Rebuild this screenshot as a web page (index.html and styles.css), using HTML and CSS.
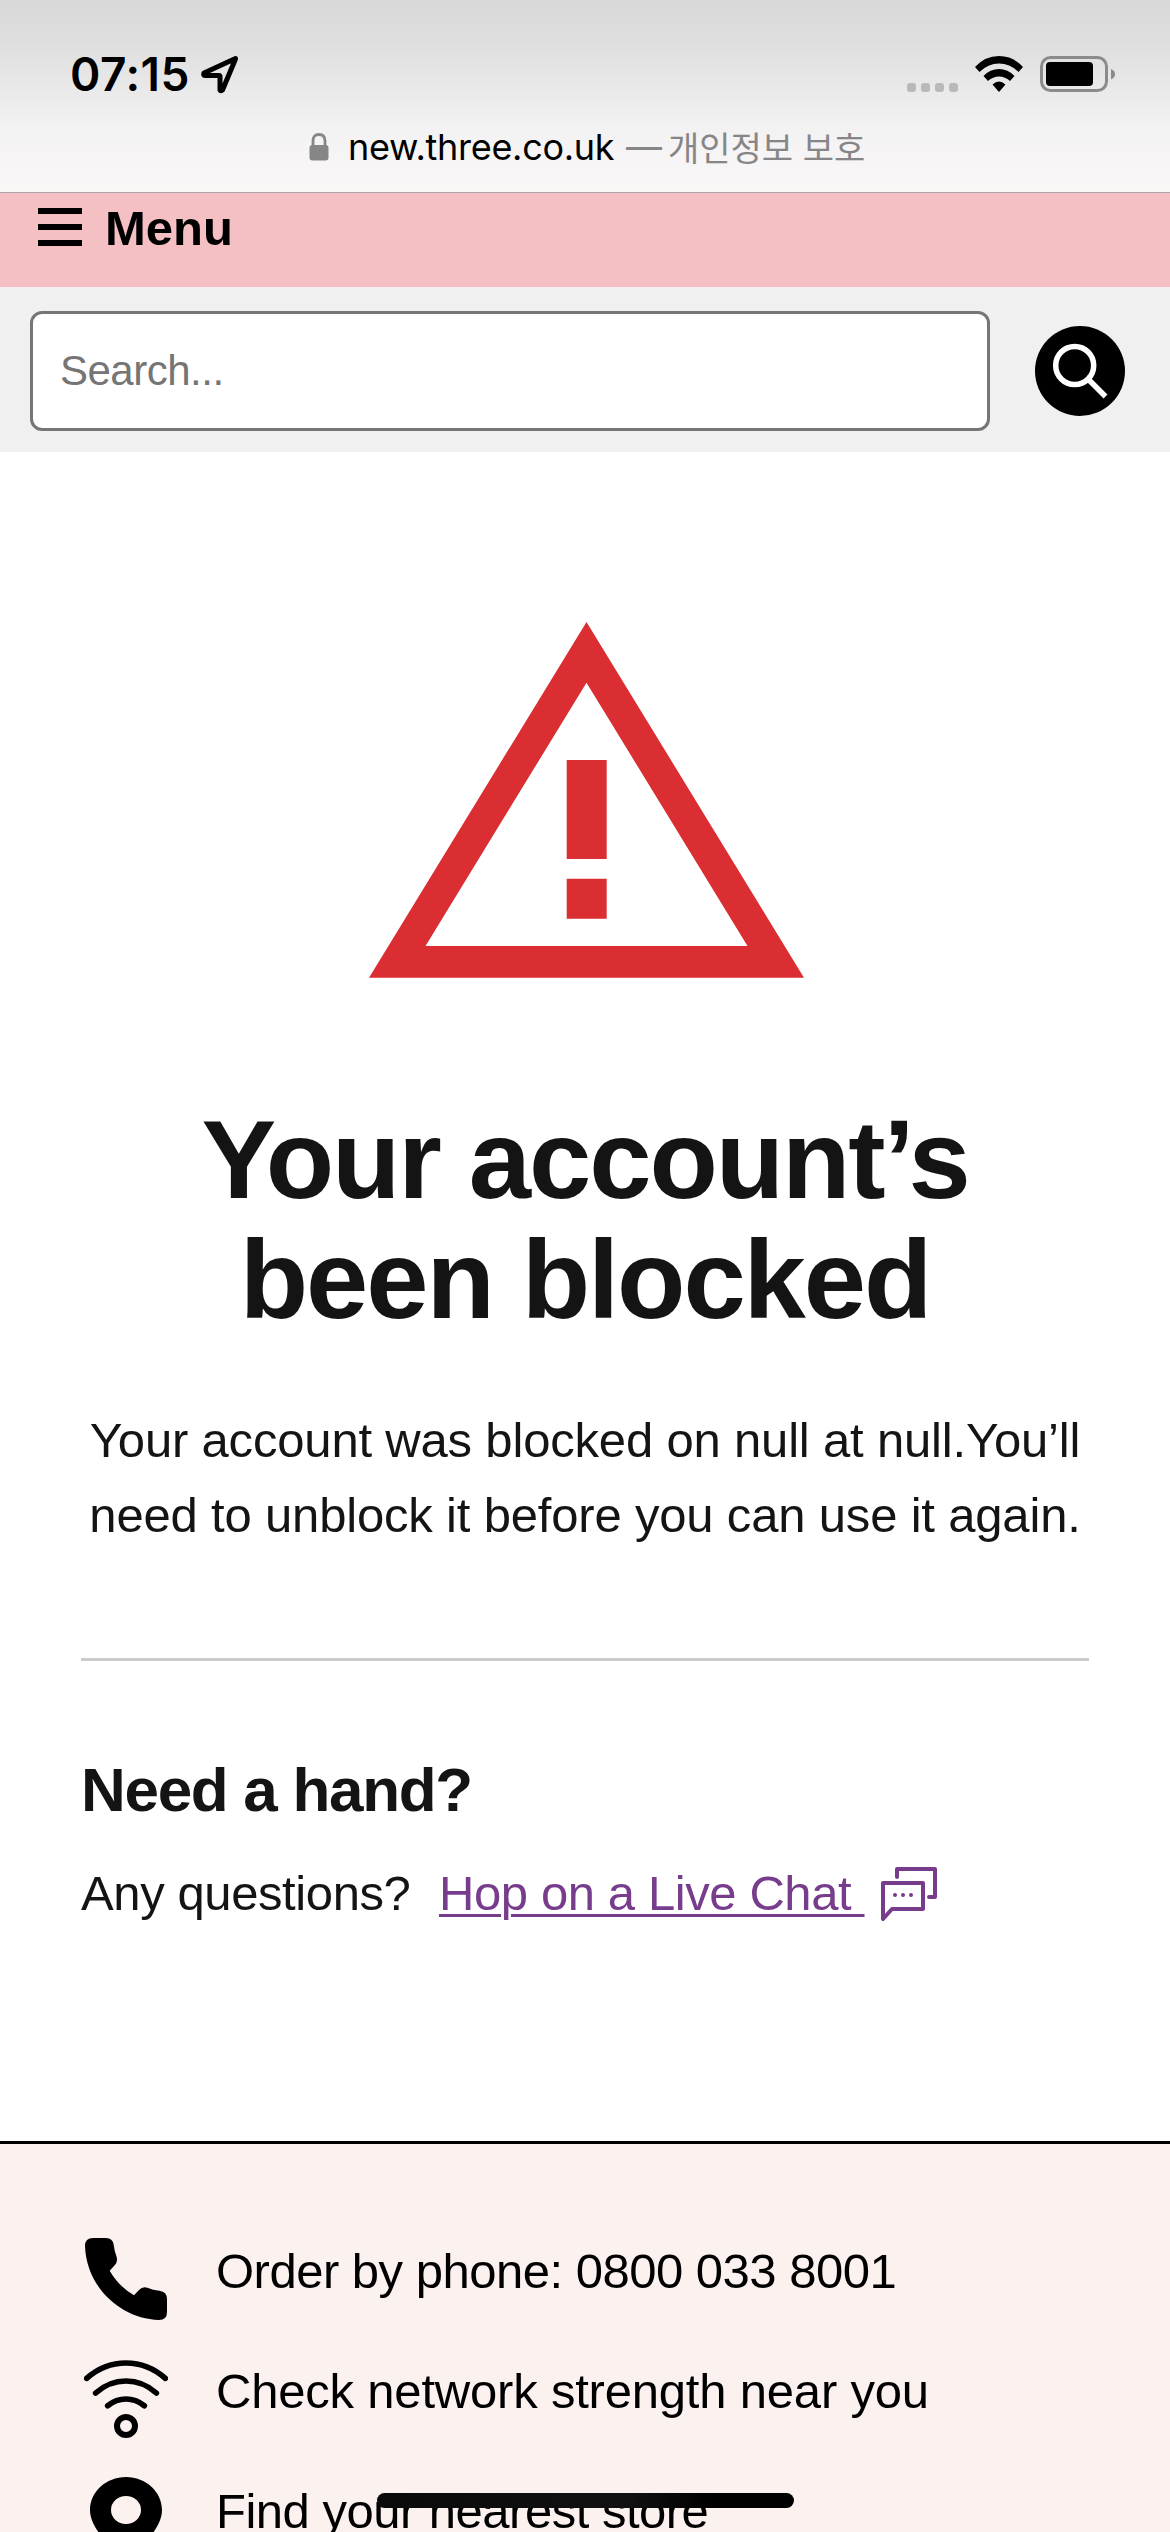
FILE: index.html
```
<!DOCTYPE html>
<html lang="en">
<head>
    <meta charset="UTF-8">
    <meta name="viewport" content="width=device-width, initial-scale=1.0">
    <title>Your account's been blocked</title>
    <link rel="stylesheet" href="styles.css">
</head>
<body>
    <!-- Browser bar -->
    <header class="browser-bar">
        <div class="status-row">
            <span class="time">07:15</span>
            <svg class="location" width="40" height="40" viewBox="0 0 40 40">
                <path d="M35.500 4.500 L4 19 Q3 21.500 5 21.500 H19 Q20 21.500 20 22.500 V36 Q21 37.500 22.500 36 L35.500 5 Z"/>
            </svg>
            <div class="status-icons">
                <div class="dots"><i></i><i></i><i></i><i></i></div>
                <svg class="wifi" width="48" height="36" viewBox="0 0 48 36">
                    <path d="M0 11 Q10 0 24 0 T48 11 L43.500 16 Q35 7.500 24 7.500 T4.500 16 Z"/>
                    <path d="M8.500 20 Q15 13 24 13 T39.500 20 L35 25 Q30 20.500 24 20.500 T13 25 Z"/>
                    <path d="M17.500 28.500 Q24 22.500 30.500 28.500 L24 36 Z"/>
                </svg>
                <svg class="battery" width="76" height="36" viewBox="0 0 76 36">
                    <rect x="1.500" y="1.500" width="65" height="33" rx="9" fill="none" stroke="#8b8b8b" stroke-width="3"/>
                    <rect x="6" y="6" width="47" height="24" rx="4"/>
                    <path d="M71 13 Q75 14.500 75 18 T71 23.500 Z" fill="#8b8b8b"/>
                </svg>
            </div>
        </div>
        <div class="address">
            <svg class="lock" width="20" height="28" viewBox="0 0 20 28">
                <path d="M4 14 V8 Q4 1.500 10 1.500 T16 8 V14" fill="none" stroke="#868688" stroke-width="2.800"/>
                <rect x="0.500" y="12" width="19" height="15.500" rx="3" fill="#868688"/>
            </svg>
            <span class="host">new.three.co.uk</span>
            <span class="dash">—</span>
            <span class="site" lang="ko">개인정보 보호</span>
        </div>
    </header>

    <nav class="menu">
        <div class="burger"><i></i><i></i><i></i></div>
        <span>Menu</span>
    </nav>

    <form class="search">
        <input type="text" placeholder="Search...">
        <button type="button" aria-label="Search">
            <svg width="90" height="90" viewBox="0 0 90 90">
                <circle cx="39.700" cy="39.500" r="19" fill="none" stroke="#fff" stroke-width="5.500"/>
                <path d="M54 54 L70.500 70.500" stroke="#fff" stroke-width="5.500"/>
            </svg>
        </button>
    </form>

    <main>
        <svg class="warning" width="436" height="356" viewBox="0 0 436 356">
            <path fill-rule="evenodd" d="M217.500 0 L435 355.700 H0 Z M217.500 60.700 L56.500 324 H378.500 Z"/>
            <path d="M197.700 138 h40 v99 h-40 Z M197.700 256.700 h40 v40 h-40 Z"/>
        </svg>
        <h1>Your account’s<br>been blocked</h1>
        <p class="message">Your account was blocked on null at null.You’ll<br>need to unblock it before you can use it again.</p>
        <hr>
        <h2>Need a hand?</h2>
        <p class="chat">
            <span class="question">Any questions?</span>
            <a href="#">Hop on a Live Chat&nbsp;</a>
            <svg width="56" height="56" viewBox="0 0 56 56">
                <path d="M16 12 V4 H54 V32 H48"/>
                <path d="M2 18 H42 V44 H11 L2 54 Z"/>
                <path d="M14 30 h.01 M22 30 h.01 M30 30 h.01"/>
            </svg>
        </p>
    </main>

    <footer>
        <ul>
            <li>
                <svg width="84" height="84" viewBox="72 351 252 252">
                    <path d="M75 378 Q75 354 99 354 H138 Q158 354 161 374 Q163 392 170 411 Q174 425 164 436 L149 452 Q177 500 222 526 L237 510 Q247 499 262 503 Q279 510 298 512 Q321 515 321 537 V576 Q321 600 297 600 C180 596 79 500 75 378 Z"/>
                </svg>
                <span class="phone">Order by phone: 0800 033 8001</span>
            </li>
            <li>
                <svg width="84" height="84" viewBox="72 711 252 252">
                    <g fill="none" stroke="#000" stroke-width="17" stroke-linecap="round">
                        <path d="M80 775 Q132 729 198 729 T316 775"/>
                        <path d="M107 819 Q147 783 198 783 T289 819"/>
                        <path d="M143 857 Q168 837 198 837 T253 857"/>
                        <circle cx="198" cy="918" r="27" stroke-width="18"/>
                    </g>
                </svg>
                <span>Check network strength near you</span>
            </li>
            <li>
                <svg width="84" height="84" viewBox="0 0 84 84">
                    <path fill-rule="evenodd" d="M42 0 C62 0 78 15 78 33 C78 50 60 68 42 84 C24 68 6 50 6 33 C6 15 22 0 42 0 Z M42 19 A15 14 0 1 0 42 47 A15 14 0 1 0 42 19 Z"/>
                </svg>
                <span class="store">Find your nearest store</span>
            </li>
        </ul>
    </footer>

    <div class="home-indicator"></div>
</body>
</html>
```

FILE: styles.css
```
* {
    box-sizing: border-box;
}

body {
    margin: 0;
    position: relative;
    height: 2532px;
    overflow: hidden;
    background: #fff;
    color: #141414;
    font-family: "Liberation Sans", Arial, sans-serif;
    font-size: 49px;
}

svg {
    display: block;
    flex: none;
}

/* Browser bar */
.browser-bar {
    height: 193px;
    border-bottom: 1px solid #a9a9ab;
    background: linear-gradient(#d8d8d8, #dedede 22%, #f3f2f3 66%, #faf7f7);
    color: #000;
    font-family: Inter, "Noto Sans CJK KR", sans-serif;
}

.status-row {
    display: flex;
    align-items: center;
    height: 120px;
    padding: 28px 54px 0 70px;
}

.time {
    width: 130px;
    font-size: 46px;
    font-weight: 600;
    letter-spacing: 0.5px;
    white-space: nowrap;
}

.location {
    fill: none;
    stroke: #000;
    stroke-width: 5;
    stroke-linejoin: round;
}

.status-icons {
    display: flex;
    align-items: flex-end;
    margin-left: auto;
}

.dots {
    display: flex;
    gap: 5px;
    margin-right: 17px;
}

.dots i {
    width: 9px;
    height: 9px;
    border-radius: 3px;
    background: #b9b9b9;
}

.wifi {
    margin-right: 17px;
}

.address {
    display: flex;
    align-items: center;
    height: 54px;
    padding-left: 309px;
    font-size: 36px;
    white-space: nowrap;
}

.host {
    margin-left: 19px;
    width: 278px;
    letter-spacing: -0.3px;
}

.dash {
    width: 42px;
    color: #868688;
}

.site {
    color: #868688;
    font-family: "Noto Sans CJK KR", sans-serif;
    font-size: 34px;
    line-height: 54px;
}

/* Menu and search */
.menu {
    display: flex;
    align-items: center;
    gap: 23px;
    height: 94px;
    padding: 0 38px 26px;
    background: #f5c0c4;
    color: #000;
    font-weight: bold;
}

.menu span {
    padding-top: 2px;
}

.burger {
    display: flex;
    flex-direction: column;
    gap: 10px;
}

.burger i {
    width: 44px;
    height: 6px;
    background: #000;
}

.search {
    display: flex;
    align-items: center;
    gap: 45px;
    height: 165px;
    padding: 3px 45px 0 30px;
    background: #f0f0f0;
}

.search input {
    width: 960px;
    height: 120px;
    padding: 0 27px;
    border: 3px solid #767676;
    border-radius: 12px;
    background: #fff;
    font: 42px "Liberation Sans", Arial, sans-serif;
    letter-spacing: -0.5px;
}

.search input::placeholder {
    color: #757575;
}

.search button {
    width: 90px;
    height: 90px;
    padding: 0;
    border: 0;
    border-radius: 50%;
    background: #000;
}

/* Content */
main {
    height: 1689px;
    padding: 170px 81px 0;
}

.warning {
    margin-left: 288px;
    fill: #da2e33;
}

h1 {
    margin: 122px 0 0;
    font-size: 112px;
    line-height: 120px;
    letter-spacing: -2.1px;
    text-align: center;
}

.message {
    margin: 63px 0 0;
    line-height: 75px;
    letter-spacing: -0.18px;
    text-align: center;
    white-space: nowrap;
}

hr {
    height: 3px;
    margin: 105px 0 0;
    border: 0;
    background: #ccc;
}

h2 {
    margin: 93px 0 0;
    font-size: 62px;
    line-height: 72px;
    letter-spacing: -1.3px;
}

.chat {
    display: flex;
    align-items: center;
    height: 72px;
    margin: 31px 0 0;
    letter-spacing: -0.4px;
    white-space: nowrap;
}

.question {
    width: 328px;
}

.chat a {
    width: 426px;
    margin-left: 30px;
    color: #783c8c;
    text-decoration-thickness: 3px;
    text-underline-offset: 4px;
}

.chat svg {
    margin-left: 16px;
    fill: none;
    stroke: #783c8c;
    stroke-width: 4;
    stroke-linecap: round;
    stroke-linejoin: round;
}

/* Footer */
footer {
    height: 391px;
    padding: 93px 84px 0;
    overflow: hidden;
    border-top: 3px solid #000;
    background: #fbf1ef;
    color: #000;
}

ul {
    margin: 0;
    padding: 0;
    list-style: none;
}

li {
    display: flex;
    gap: 48px;
    height: 120px;
}

li span {
    line-height: 68px;
    letter-spacing: -0.2px;
    white-space: nowrap;
}

li .phone,
li .store {
    letter-spacing: -0.5px;
}

.home-indicator {
    position: absolute;
    left: 377px;
    bottom: 24px;
    width: 417px;
    height: 15px;
    border-radius: 8px;
    background: linear-gradient(to right, #0a0a0a, #111 60%, #000 80%);
}
```
